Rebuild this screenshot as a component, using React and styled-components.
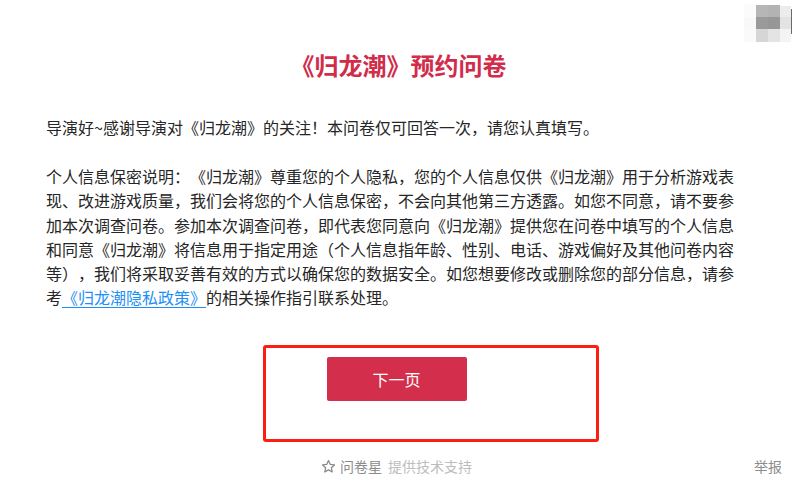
import React from 'react';
import styled, { createGlobalStyle } from 'styled-components';

const GlobalStyle = createGlobalStyle`
    html, body {
        margin: 0;
        padding: 0;
        background: #ffffff;
    }
    body {
        font-family: "Microsoft YaHei", "Noto Sans CJK SC", "Noto Sans", sans-serif;
        color: #333333;
        text-spacing-trim: space-all;
    }
`;

const App = () => {
    return (
        <Page>
            <GlobalStyle />
            <Title>《归龙潮》预约问卷</Title>
            <Content>
                <Paragraph $gap="34px">
                    导演好~感谢导演对《归龙潮》的关注！本问卷仅可回答一次，请您认真填写。
                </Paragraph>
                <Paragraph $gap="25px">
                    个人信息保密说明：《归龙潮》尊重您的个人隐私，您的个人信息仅供《归龙潮》用于分析游戏表现、改进游戏质量，我们会将您的个人信息保密，不会向其他第三方透露。如您不同意，请不要参加本次调查问卷。参加本次调查问卷，即代表您同意向《归龙潮》提供您在问卷中填写的个人信息和同意《归龙潮》将信息用于指定用途（个人信息指年龄、性别、电话、游戏偏好及其他问卷内容等），我们将采取妥善有效的方式以确保您的数据安全。如您想要修改或删除您的部分信息，请参考<PolicyLink href="#">《归龙潮隐私政策》</PolicyLink>的相关操作指引联系处理。
                </Paragraph>
            </Content>
            <ButtonRow>
                <NextButton type="button">下一页</NextButton>
            </ButtonRow>
            <Footer>
                <span />
                <Support>
                    <StarIcon viewBox="0 0 24 24">
                        <path d="M12 2.5l2.9 6.2 6.7.8-5 4.6 1.4 6.7L12 17.4l-6 3.4 1.4-6.7-5-4.6 6.7-.8z" />
                    </StarIcon>
                    <Brand>问卷星</Brand>
                    <SupportText>提供技术支持</SupportText>
                </Support>
                <Report>举报</Report>
            </Footer>
            <Highlight />
            <QrBlur viewBox="0 0 48 38">
                <rect x="0" y="0" width="12" height="13" fill="#fbfbfb" />
                <rect x="0" y="13" width="12" height="12" fill="#f8f8f8" />
                <rect x="0" y="25" width="12" height="13" fill="#fafafa" />
                <rect x="12" y="1" width="12" height="12" fill="#b6b6b6" />
                <rect x="12" y="13" width="12" height="12" fill="#9a9a9a" />
                <rect x="12" y="25" width="12" height="13" fill="#d6d6d6" />
                <rect x="24" y="1" width="12" height="12" fill="#b3b3b3" />
                <rect x="24" y="13" width="12" height="12" fill="#979797" />
                <rect x="24" y="25" width="12" height="13" fill="#e4e4e4" />
                <rect x="36" y="2" width="11" height="11" fill="#ececec" />
                <rect x="36" y="13" width="11" height="12" fill="#e3e3e3" />
                <rect x="36" y="25" width="11" height="13" fill="#f4f4f4" />
                <rect x="47" y="5" width="1" height="25" fill="#6a6a6a" />
            </QrBlur>
        </Page>
    );
};

const Page = styled.div`
    position: relative;
    width: 793px;
    height: 489px;
    overflow: hidden;
    padding-top: 49px;
    box-sizing: border-box;
`;

const Title = styled.h1`
    margin: 0;
    text-align: center;
    font-size: 24px;
    line-height: 32px;
    font-weight: bold;
    color: #d12c4a;
    padding-left: 4px;
`;

const Content = styled.div`
    margin-left: 46px;
    width: 692px;
`;

const Paragraph = styled.p`
    margin: ${(props) => props.$gap} 0 0 0;
    font-size: 16px;
    line-height: 24.2px;
    color: #262626;
`;

const PolicyLink = styled.a`
    color: #1e8ff5;
    text-decoration: underline;
    text-underline-offset: 3px;
`;

const ButtonRow = styled.div`
    display: flex;
    justify-content: center;
    margin-top: 48px;
`;

const NextButton = styled.button`
    width: 140px;
    height: 44px;
    border: none;
    border-radius: 2px;
    background-color: #d32f4c;
    color: #ffffff;
    font-family: inherit;
    font-size: 16px;
    cursor: pointer;
`;

const Footer = styled.div`
    display: grid;
    grid-template-columns: 1fr auto 1fr;
    align-items: center;
    margin-top: 55px;
    height: 20px;
    font-size: 14px;
`;

const Support = styled.div`
    display: flex;
    align-items: center;
`;

const StarIcon = styled.svg`
    width: 15px;
    height: 15px;
    margin-right: 4px;
    fill: none;
    stroke: #8a8a8a;
    stroke-width: 2;
    stroke-linejoin: round;
`;

const Brand = styled.span`
    color: #8c8c8c;
    margin-right: 6px;
`;

const SupportText = styled.span`
    color: #bdbdbd;
`;

const Report = styled.span`
    justify-self: end;
    margin-right: 11px;
    color: #8c8c8c;
`;

const Highlight = styled.div`
    position: absolute;
    left: 263px;
    top: 345px;
    width: 336px;
    height: 97px;
    box-sizing: border-box;
    border: 3px solid #fb1e12;
    border-radius: 3px;
    pointer-events: none;
`;

const QrBlur = styled.svg`
    position: absolute;
    top: 4px;
    right: 1px;
    width: 48px;
    height: 38px;
`;

export default App;
